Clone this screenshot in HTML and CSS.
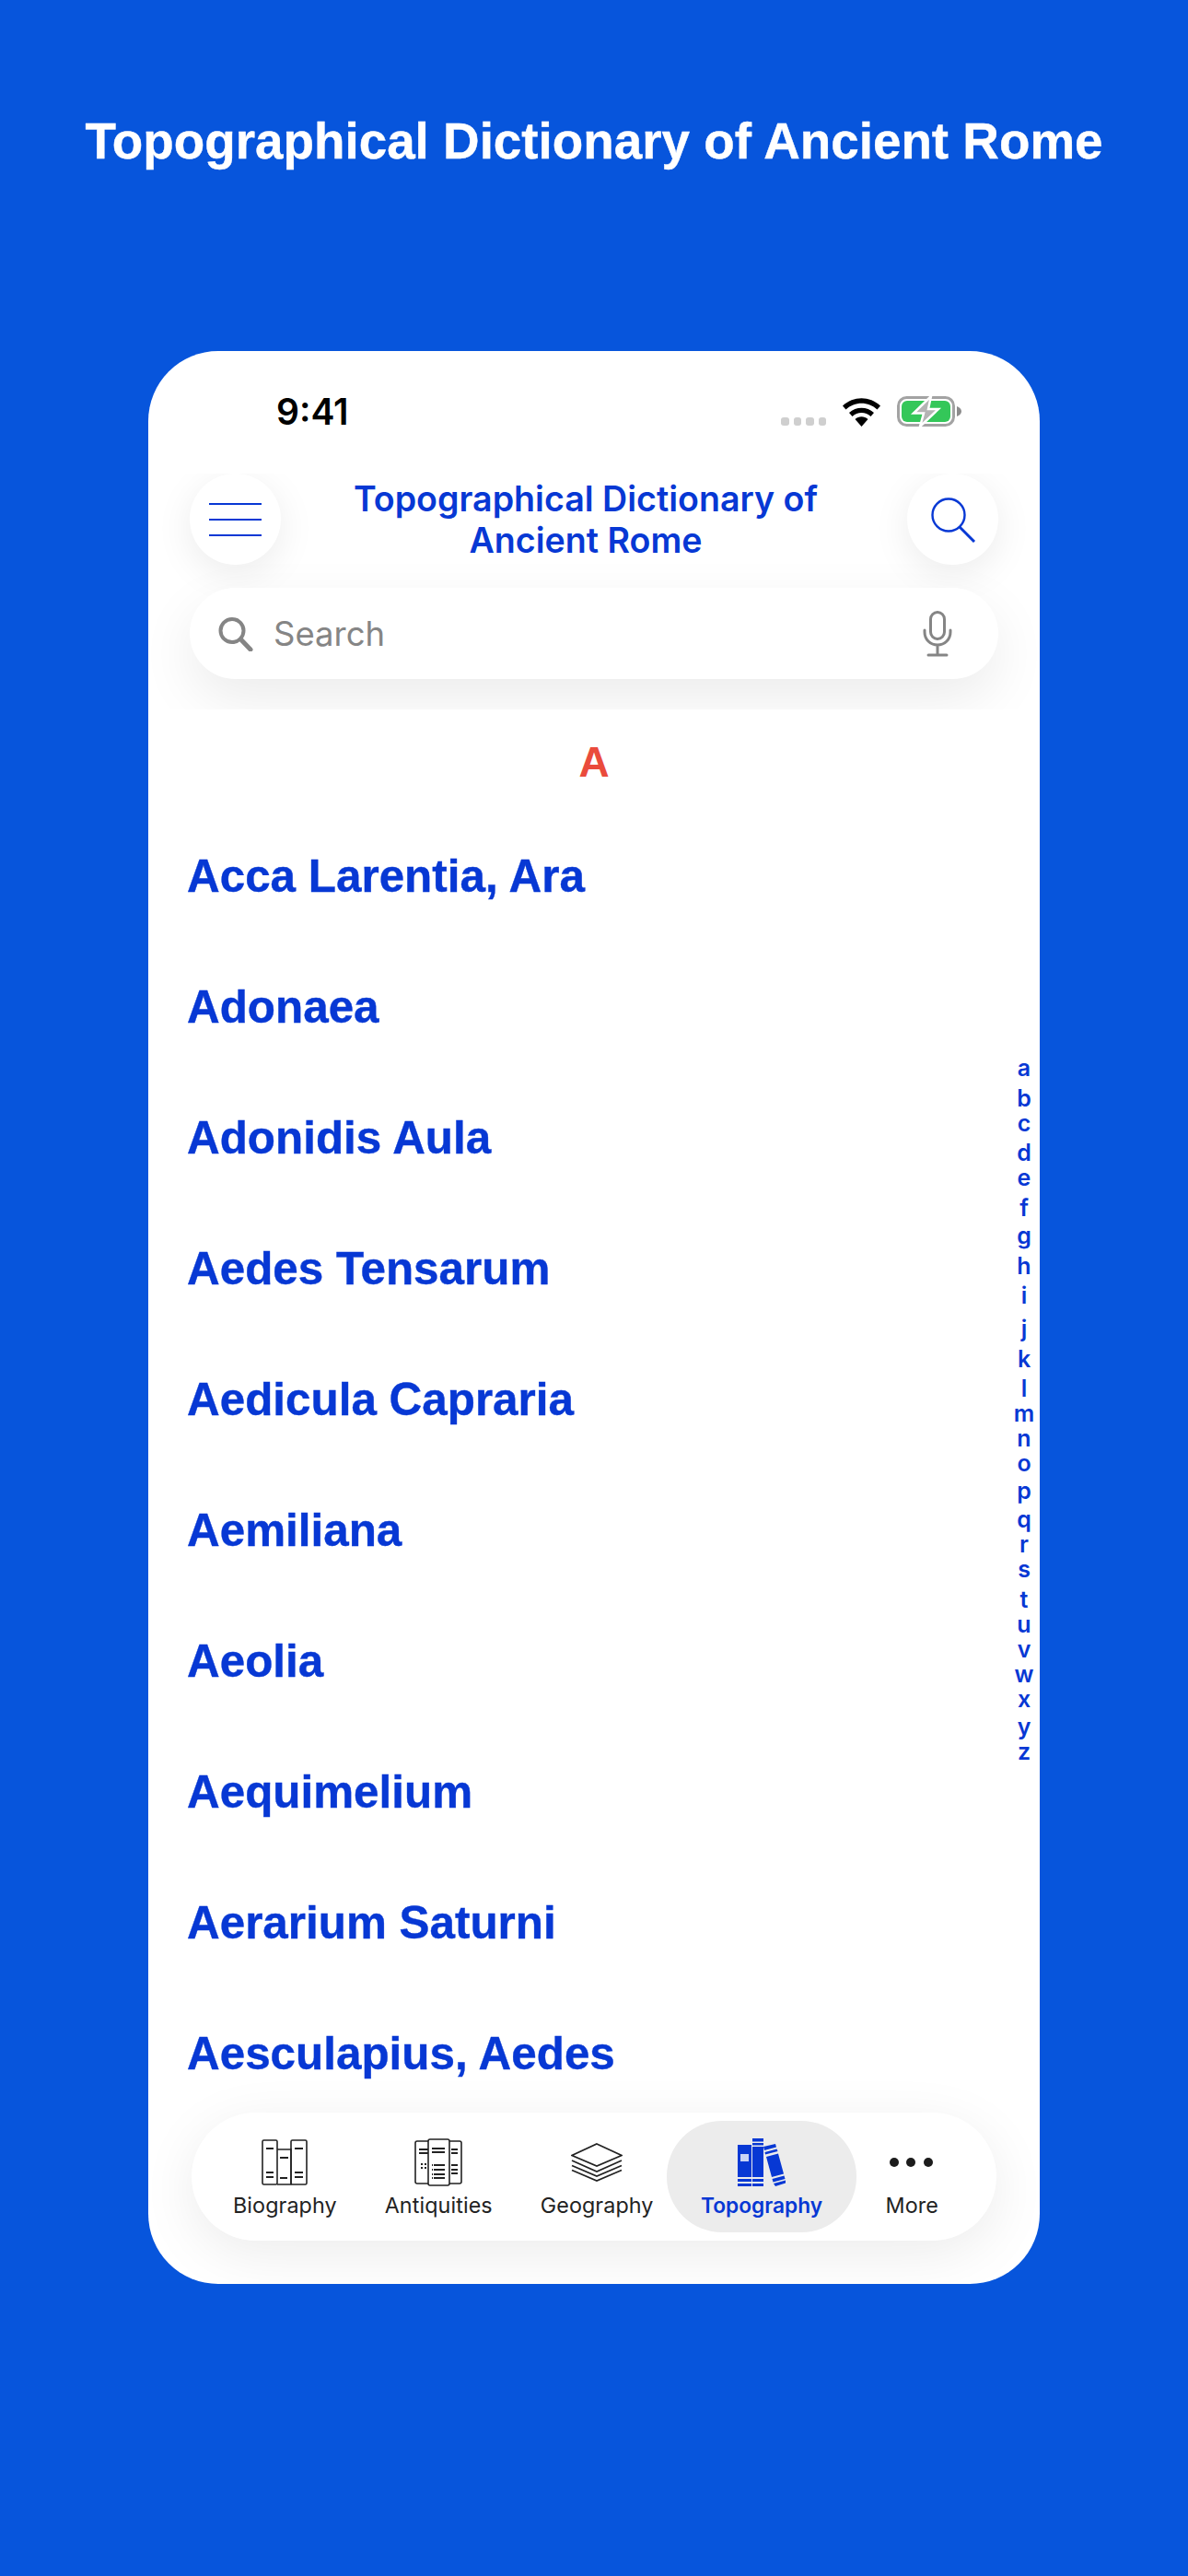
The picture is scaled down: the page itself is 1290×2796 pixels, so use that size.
FILE: index.html
```html
<!DOCTYPE html>
<html lang="en">
<head>
  <meta charset="UTF-8" />
  <title>Topographical Dictionary of Ancient Rome</title>
  <meta name="viewport" content="width=device-width, initial-scale=1.0" />
  <link rel="stylesheet" href="styles.css">
</head>
<body>
  <h1 class="promo">Topographical Dictionary of Ancient Rome</h1>

  <div class="phone">
    <div class="status">
      <div class="clock">9:41</div>
      <div class="status-icons">
        <div class="signal"><i></i><i></i><i></i><i></i></div>
        <svg class="wifi" width="43" height="32" viewBox="0 0 43 32">
          <path d="M1 9.500C12.500 -1.500 30.500 -1.500 42 9.500L38.500 13.500C29 4.500 14 4.500 4.500 13.500Z" fill="#000"/>
          <path d="M8 17C15.500 10 27.500 10 35 17L31.500 21C26 15.800 17 15.800 11.500 21Z" fill="#000"/>
          <path d="M14.500 24C18.500 20.300 24.500 20.300 28.500 24L21.500 32Z" fill="#000"/>
        </svg>
        <svg class="battery" width="70" height="33" viewBox="0 0 70 33">
          <rect x="1.500" y="1.500" width="60" height="30" rx="9" fill="none" stroke="#a3a3a3" stroke-width="3"/>
          <rect x="5" y="5" width="53" height="23" rx="6" fill="#34c759"/>
          <path d="M65 11C68 12 70 14 70 16.500C70 19 68 21 65 22Z" fill="#8c8c8c"/>
          <path d="M37 0L18 18.500H29L25 33L45 14H34Z" fill="#b4b4b4" stroke="#fff" stroke-width="2.500"/>
        </svg>
      </div>
    </div>

    <div class="header">
      <div class="top-row">
        <div class="round-btn">
          <svg width="57" height="36" viewBox="0 0 57 36">
            <path d="M0 1H57M0 18H57M0 35H57" stroke="#0738d4" stroke-width="2.200" fill="none"/>
          </svg>
        </div>
        <div class="app-title">Topographical Dictionary of<br>Ancient Rome</div>
        <div class="round-btn">
          <svg width="50" height="50" viewBox="0 0 50 50">
            <circle cx="20" cy="20" r="17.500" stroke="#0738d4" stroke-width="2.400" fill="none"/>
            <path d="M32 33L48 49" stroke="#0738d4" stroke-width="3" fill="none"/>
          </svg>
        </div>
      </div>
      <div class="search-bar">
        <svg width="40" height="38" viewBox="0 0 40 38">
          <circle cx="16" cy="15.500" r="12.500" stroke="#858585" stroke-width="4" fill="none"/>
          <path d="M25.500 25L36 36" stroke="#858585" stroke-width="5" stroke-linecap="round" fill="none"/>
        </svg>
        <span class="search-text">Search</span>
        <svg class="mic" width="32" height="50" viewBox="0 0 32 50">
          <rect x="8.500" y="1.500" width="15" height="29" rx="7.500" stroke="#858585" stroke-width="3" fill="none"/>
          <path d="M2 21V23C2 31 8 37 16 37C24 37 30 31 30 23V21M16 37V47M6 48H26" stroke="#858585" stroke-width="3" stroke-linecap="round" fill="none"/>
        </svg>
      </div>
    </div>

    <div class="list">
      <div class="section-letter">A</div>
      <div class="item">Acca Larentia, Ara</div>
      <div class="item">Adonaea</div>
      <div class="item">Adonidis Aula</div>
      <div class="item">Aedes Tensarum</div>
      <div class="item">Aedicula Capraria</div>
      <div class="item">Aemiliana</div>
      <div class="item">Aeolia</div>
      <div class="item">Aequimelium</div>
      <div class="item">Aerarium Saturni</div>
      <div class="item">Aesculapius, Aedes</div>

      <div class="alpha">
        <div>a</div><div class="up">b</div><div>c</div><div class="up">d</div><div>e</div>
        <div class="up">f</div><div class="down">g</div><div class="up">h</div><div class="up">i</div><div class="up down">j</div>
        <div class="up">k</div><div class="up">l</div><div>m</div><div>n</div><div>o</div>
        <div class="down">p</div><div class="down">q</div><div>r</div><div>s</div><div class="up">t</div>
        <div>u</div><div>v</div><div>w</div><div>x</div><div class="down">y</div><div>z</div>
      </div>
    </div>

    <div class="footer">
      <div class="tabs">
        <div class="tab">
          <svg width="50" height="52" viewBox="0 0 50 50">
            <g fill="none" stroke="#222" stroke-width="1.600">
              <rect x="1" y="1" width="16" height="48" rx="1.500"/>
              <path d="M17 11H32V49H17"/>
              <rect x="32" y="1" width="17" height="48" rx="1.500"/>
              <path d="M5 10H13M5 36H13M5 41H13M20 20H29M20 42H28M36 10H45M36 36H45M36 41H45" stroke-width="2"/>
            </g>
          </svg>
          <span>Biography</span>
        </div>
        <div class="tab">
          <svg width="52" height="52" viewBox="0 0 52 52">
            <g fill="none" stroke="#222" stroke-width="1.600">
              <path d="M15 3H3C1.500 3 1 4 1 5V47C1 48 1.500 49 3 49H15"/>
              <path d="M38 3H49C50.500 3 51 4 51 5V47C51 48 50.500 49 49 49H38"/>
              <rect x="15" y="1" width="23" height="50" rx="2"/>
              <path d="M19 11H33M19 15H33M21 29H33M21 34H33M21 39H33M21 43H33M5 12H15M5 16H15M40 12H47M40 16H47M40 29H47M40 34H47M40 38H47" stroke-width="1.800"/>
              <path d="M19 29H20M19 34H20M19 39H20M19 43H20M7 28H13M7 32H13" stroke-width="1.800" stroke-dasharray="2 2"/>
            </g>
          </svg>
          <span>Antiquities</span>
        </div>
        <div class="tab">
          <svg width="56" height="52" viewBox="0 0 56 42">
            <g fill="none" stroke="#222" stroke-width="1.700">
              <path d="M28 1L55 13.500L28 25L1 13.500Z"/>
              <path d="M1 19L28 31L55 19M1 24.500L28 36L55 24.500M1 29.500L28 41L55 29.500"/>
            </g>
          </svg>
          <span>Geography</span>
        </div>
        <div class="tab active">
          <svg width="52" height="52" viewBox="0 0 52 52">
            <g fill="#0738d4">
              <path d="M0 7H15V42H0ZM3 17V25H12V17Z" fill-rule="evenodd"/>
              <rect x="3" y="17" width="9" height="8" fill="#c9d4f5"/>
              <rect y="44" width="15" height="3"/>
              <rect y="49" width="15" height="3"/>
              <rect x="16" width="12" height="3.500"/>
              <rect x="16" y="5" width="12" height="2.500"/>
              <rect x="16" y="9" width="12" height="33"/>
              <rect x="16" y="44" width="12" height="3"/>
              <rect x="16" y="49" width="12" height="3"/>
              <path d="M28 9L41 6L42 9.500L29 13ZM29.500 15L42.500 11.500L43.500 14L30 17.500ZM31 20L44 16.500L50 38.500L37 42ZM37.500 44L50.500 40.500L51.500 44L38.500 47.500ZM39 49L52 45.500L52 48.500L41 52Z"/>
            </g>
          </svg>
          <span>Topography</span>
        </div>
        <div class="tab">
          <svg width="52" height="52" viewBox="0 0 52 52">
            <circle cx="7" cy="26" r="5" fill="#1c1c1c"/>
            <circle cx="25" cy="26" r="5" fill="#1c1c1c"/>
            <circle cx="44" cy="26" r="5" fill="#1c1c1c"/>
          </svg>
          <span>More</span>
        </div>
      </div>
    </div>
  </div>
</body>
</html>
```
FILE: styles.css
```css
html, body {
  margin: 0;
  padding: 0;
  height: 2796px;
  background: #0755dc;
  overflow: hidden;
}

.promo {
  margin: 0;
  height: 381px;
  padding-top: 119px;
  box-sizing: border-box;
  color: white;
  font-family: "Liberation Sans", sans-serif;
  font-weight: 700;
  font-size: 54.800px;
  line-height: 68px;
  text-align: center;
  -webkit-text-stroke: 0.4px white;
}

.phone {
  width: 968px;
  height: 2098px;
  margin: 0 auto;
  background: white;
  border-radius: 76px;
  overflow: hidden;
  display: flex;
  flex-direction: column;
}

/* status bar */
.status {
  height: 133px;
  flex: none;
  display: flex;
  justify-content: space-between;
  padding: 49px 85px 0 139px;
  box-sizing: border-box;
}

.clock {
  font-family: Inter, sans-serif;
  font-weight: 600;
  font-size: 39px;
  line-height: 34px;
  color: black;
}

.status-icons {
  display: flex;
  align-items: flex-start;
  gap: 17px;
}

.signal {
  display: flex;
  gap: 5px;
  margin-top: 23px;
}

.signal i {
  width: 8.500px;
  height: 9px;
  border-radius: 3px;
  background: #cfcfcf;
}

.wifi { margin-top: 1px; }

/* header */
.header {
  flex: none;
  height: 256px;
  padding: 0 45px;
  box-sizing: border-box;
  background: white;
  overflow: hidden;
}

.top-row {
  display: flex;
  align-items: center;
  justify-content: space-between;
}

.round-btn {
  width: 99px;
  height: 99px;
  border-radius: 50%;
  background: white;
  box-shadow: 0 10px 40px rgba(0, 0, 0, 0.08);
  display: flex;
  align-items: center;
  justify-content: center;
}

.app-title {
  flex: 1;
  padding-right: 18px;
  text-align: center;
  color: #0738d4;
  font-family: Inter, sans-serif;
  font-weight: 600;
  font-size: 37.600px;
  line-height: 45px;
}

.search-bar {
  position: relative;
  margin-top: 25px;
  height: 99px;
  border-radius: 50px;
  background: white;
  box-shadow: 0 22px 60px rgba(0, 0, 0, 0.08);
  display: flex;
  align-items: center;
  padding: 0 50px 0 30px;
}

.search-text {
  flex: 1;
  margin-left: 21px;
  color: #858585;
  font-family: Inter, sans-serif;
  font-size: 36.500px;
}

/* list */
.list {
  flex: 1;
  min-height: 0;
  position: relative;
  overflow: hidden;
}

.section-letter {
  height: 103px;
  padding-top: 7px;
  color: #ea4b3c;
  font-family: "Liberation Sans", sans-serif;
  font-weight: 700;
  font-size: 46px;
  line-height: 100px;
  text-align: center;
}

.item {
  height: 142px;
  padding-left: 42px;
  color: #0738d4;
  font-family: "Liberation Sans", sans-serif;
  font-weight: 700;
  font-size: 49.400px;
  line-height: 142px;
  -webkit-text-stroke: 0.4px #0738d4;
}

.alpha {
  position: absolute;
  top: 376px;
  right: 0;
  width: 34px;
  text-align: center;
  color: #0738d4;
  font-family: Inter, sans-serif;
  font-weight: 600;
  font-size: 25px;
  line-height: 27px;
}

.alpha .up { padding-top: 5.500px; }
.alpha .down { padding-top: 3px; padding-bottom: 0.500px; }
.alpha .up.down { padding-top: 8.500px; padding-bottom: 0.500px; }

/* tab bar */
.footer {
  flex: none;
  padding: 30px 47px 47px 47px;
  background: transparent;
}

.tabs {
  height: 139px;
  border-radius: 70px;
  background: white;
  box-shadow: 0 14px 60px rgba(0, 0, 0, 0.08);
  display: flex;
  align-items: center;
  padding-left: 19px;
}

.tab {
  height: 121px;
  box-sizing: border-box;
  display: flex;
  flex-direction: column;
  align-items: center;
  padding: 19px 26px 0;
  color: #222;
  font-family: Inter, sans-serif;
  font-size: 23.300px;
  line-height: 32px;
  gap: 5px;
  letter-spacing: 0.1px;
}

.tab svg { display: block; }

.tab.active {
  margin: 0 6px 0 -11px;
  padding: 19px 36.500px 0;
  border-radius: 60px;
  background: #ececec;
  color: #0738d4;
  font-size: 22.700px;
  font-weight: 600;
  letter-spacing: 0;
}
```
